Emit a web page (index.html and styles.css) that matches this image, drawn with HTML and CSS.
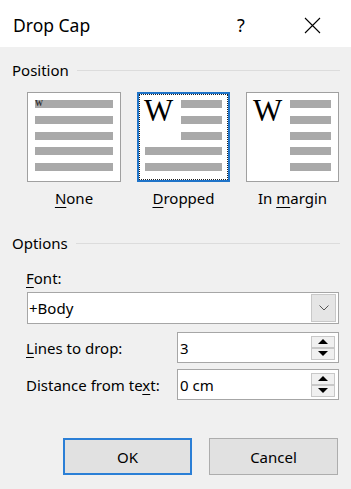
FILE: index.html
```html
<!DOCTYPE html>
<html lang="en">
<head>
<meta charset="utf-8">
<title>Drop Cap</title>
<link rel="stylesheet" href="styles.css">
</head>
<body>
<div class="dialog">
  <header class="titlebar">
    <span class="title">Drop Cap</span>
    <span class="help">?</span>
    <svg class="close" width="17" height="17" viewBox="0 0 17 17" aria-hidden="true">
      <path d="M1 1 L16 16 M16 1 L1 16" stroke="#000" stroke-width="1.1" fill="none"/>
    </svg>
  </header>

  <div class="group-head pos-head">
    <span>Position</span><span class="rule"></span>
  </div>

  <div class="choices">
    <div class="choice">
      <div class="thumb">
        <div class="inner none">
          <div class="bar"><span class="tiny">W</span></div>
          <div class="bar"></div>
          <div class="bar"></div>
          <div class="bar"></div>
          <div class="bar"></div>
        </div>
      </div>
      <div class="choice-label"><u>N</u>one</div>
    </div>
    <div class="choice">
      <div class="thumb selected">
        <div class="focus">
          <div class="inner dropped">
            <span class="bigw">W</span>
            <div class="bar r1"></div>
            <div class="bar r2"></div>
            <div class="bar r3"></div>
            <div class="bar full r4"></div>
            <div class="bar full r5"></div>
          </div>
        </div>
      </div>
      <div class="choice-label"><u>D</u>ropped</div>
    </div>
    <div class="choice">
      <div class="thumb">
        <div class="inner margin">
          <span class="bigw">W</span>
          <div class="bar r1"></div>
          <div class="bar r2"></div>
          <div class="bar r3"></div>
          <div class="bar r4"></div>
          <div class="bar r5"></div>
        </div>
      </div>
      <div class="choice-label">In <u>m</u>argin</div>
    </div>
  </div>

  <div class="group-head opt-head">
    <span>Options</span><span class="rule"></span>
  </div>

  <div class="options">
    <div class="field-label"><u>F</u>ont:</div>
    <div class="combo">
      <span class="combo-text">+Body</span>
      <span class="combo-btn">
        <svg width="10" height="6" viewBox="0 0 10 6" aria-hidden="true"><path d="M0.5 0.5 L5 5 L9.5 0.5" stroke="#555" stroke-width="1" fill="none"/></svg>
      </span>
    </div>
    <div class="row lines-row">
      <span class="row-label"><u>L</u>ines to drop:</span>
      <div class="spin">
        <span class="spin-text">3</span>
        <span class="spin-btns">
          <span class="spin-btn"><span class="tri up"></span></span>
          <span class="spin-btn"><span class="tri down"></span></span>
        </span>
      </div>
    </div>
    <div class="row dist-row">
      <span class="row-label">Distance from te<u>x</u>t:</span>
      <div class="spin">
        <span class="spin-text">0 cm</span>
        <span class="spin-btns">
          <span class="spin-btn"><span class="tri up"></span></span>
          <span class="spin-btn"><span class="tri down"></span></span>
        </span>
      </div>
    </div>
  </div>

  <div class="buttons">
    <button class="btn default">OK</button>
    <button class="btn">Cancel</button>
  </div>
</div>
</body>
</html>
```
FILE: styles.css
```css
html, body {
  margin: 0;
  padding: 0;
}
body {
  width: 351px;
  height: 489px;
  overflow: hidden;
  background: #f0f0f0;
  font-family: "Noto Sans", "Open Sans", sans-serif;
  font-size: 15px;
  color: #000;
}
.dialog {
  display: flex;
  flex-direction: column;
  height: 489px;
}
u {
  text-decoration: underline;
  text-decoration-thickness: 1px;
  text-underline-offset: 3px;
}
.titlebar {
  height: 47px;
  background: #fff;
  display: flex;
  align-items: center;
  padding: 0 30px 0 13px;
}
.title {
  flex: 1;
  font-size: 17.5px;
  margin-top: 2px;
}
.help {
  width: 16px;
  text-align: center;
  font-size: 18px;
  margin-right: 55px;
  margin-top: 2px;
}
.close {
  display: block;
  margin-top: 3px;
}
.group-head {
  display: flex;
  align-items: center;
  gap: 8px;
  padding: 0 11px 0 12px;
  height: 20px;
  line-height: 20px;
}
.rule {
  flex: 1;
  height: 1px;
  background: #dcdcdc;
  margin-top: 1px;
}
.pos-head {
  margin-top: 13px;
}
.choices {
  display: grid;
  grid-template-columns: 94px 93px 93px;
  column-gap: 16px;
  padding-left: 27px;
  margin-top: 12px;
}
.choice {
  display: flex;
  flex-direction: column;
  align-items: center;
}
.thumb {
  box-sizing: border-box;
  width: 100%;
  height: 90px;
  background: #fff;
  border: 1px solid #a0a0a0;
}
.thumb.selected {
  border: 2px solid #1f74c9;
}
.focus {
  box-sizing: border-box;
  height: 100%;
  border: 1px dotted #222;
}
.inner {
  display: grid;
  grid-template-rows: repeat(5, 8px);
  row-gap: 7.75px;
  padding: 7px 7px 0 7px;
}
.none {
  grid-template-columns: 1fr;
}
.dropped, .margin {
  grid-template-columns: 28px 41px;
  column-gap: 8px;
  justify-content: end;
  padding: 7px 7px 0 7px;
}
.selected .inner {
  padding: 5px 5px 0 5px;
}
.bar {
  background: #a9a9a9;
  height: 8px;
  display: flex;
  align-items: center;
}
.tiny {
  font-family: "Liberation Serif", serif;
  font-size: 8px;
  line-height: 8px;
  color: #333;
  margin-left: 0;
  font-weight: bold;
}
.bigw {
  grid-column: 1;
  grid-row: 1 / 4;
  font-family: "Liberation Serif", serif;
  font-size: 31px;
  line-height: 31px;
  margin-top: -5px;
  margin-left: -1px;
}
.r1 { grid-column: 2; grid-row: 1; }
.r2 { grid-column: 2; grid-row: 2; }
.r3 { grid-column: 2; grid-row: 3; }
.r4 { grid-column: 2; grid-row: 4; }
.r5 { grid-column: 2; grid-row: 5; }
.full { grid-column: 1 / 3; }
.choice-label {
  margin-top: 6px;
  line-height: 20px;
}
.opt-head {
  margin-top: 25px;
}
.options {
  display: flex;
  flex-direction: column;
  padding: 0 12px 0 26px;
}
.field-label {
  margin-top: 15px;
  line-height: 20px;
}
.combo {
  box-sizing: border-box;
  margin-top: 4px;
  margin-left: 1px;
  height: 32px;
  background: #fff;
  border: 1px solid #a6a6a6;
  display: flex;
  align-items: center;
  padding: 0 2px 0 1px;
}
.combo-text {
  flex: 1;
}
.combo-btn {
  box-sizing: border-box;
  width: 25px;
  height: 28px;
  background: #e5e5e5;
  border: 1px solid #c8c8c8;
  display: flex;
  align-items: center;
  justify-content: center;
}
.row {
  display: flex;
  align-items: center;
  justify-content: space-between;
}
.lines-row {
  margin-top: 8px;
}
.dist-row {
  margin-top: 6px;
}
.spin {
  box-sizing: border-box;
  width: 162px;
  height: 31px;
  background: #fff;
  border: 1px solid #a6a6a6;
  display: flex;
  align-items: center;
  padding: 0 3px 0 2px;
}
.spin-text {
  flex: 1;
}
.spin-btns {
  display: flex;
  flex-direction: column;
}
.spin-btn {
  box-sizing: border-box;
  width: 24px;
  height: 12px;
  background: #f0f0f0;
  border: 1px solid #c8c8c8;
  display: flex;
  align-items: center;
  justify-content: center;
}
.spin-btn + .spin-btn {
  margin-top: -0px;
}
.tri {
  width: 0;
  height: 0;
  border-left: 5px solid transparent;
  border-right: 5px solid transparent;
}
.tri.up {
  border-bottom: 5px solid #000;
}
.tri.down {
  border-top: 5px solid #000;
}
.buttons {
  display: flex;
  justify-content: flex-end;
  gap: 17px;
  padding-right: 13px;
  margin-top: 38px;
}
.btn {
  box-sizing: border-box;
  width: 129px;
  height: 37px;
  background: #e1e1e1;
  border: 1px solid #adadad;
  font-family: "Noto Sans", "Open Sans", sans-serif;
  font-size: 15px;
  color: #000;
  padding: 0;
}
.btn.default {
  border: 2px solid #2b7fd6;
}
```
